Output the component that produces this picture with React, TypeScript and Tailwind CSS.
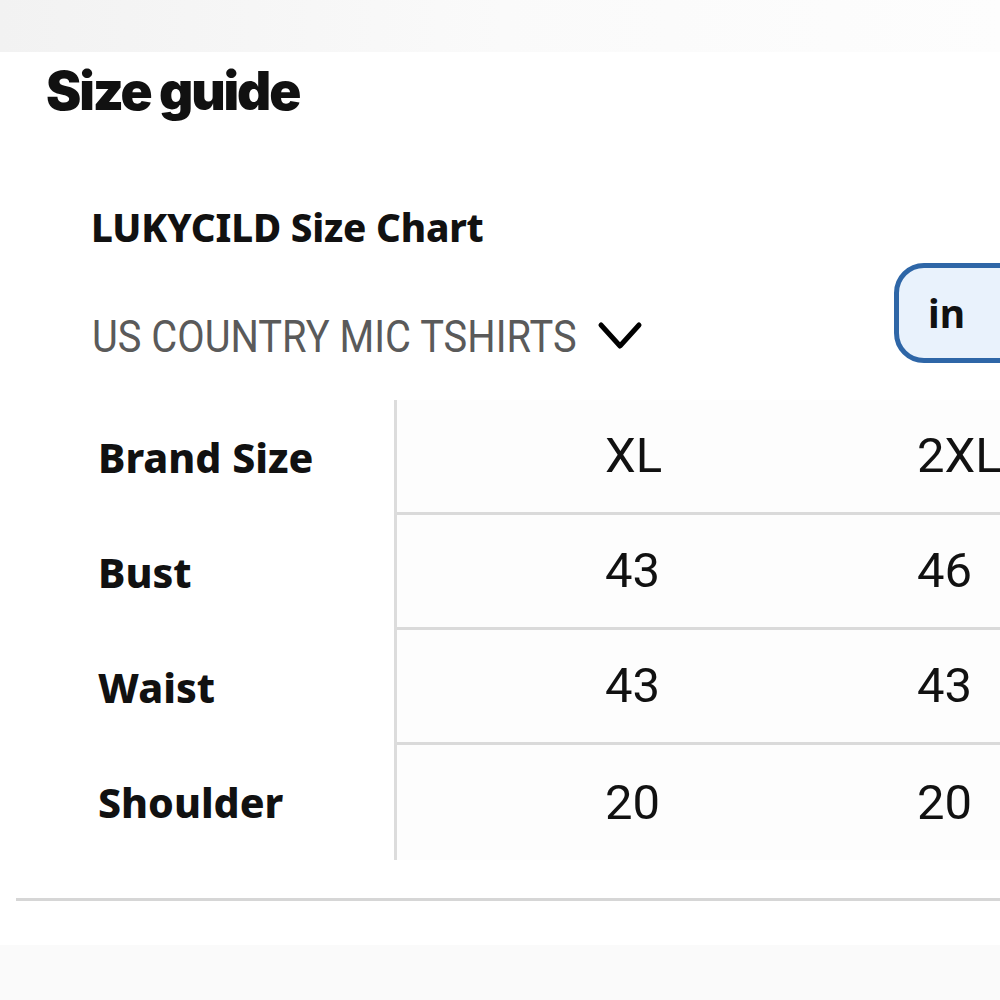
const rows = [
  { label: "Brand Size", values: ["XL", "2XL"] },
  { label: "Bust", values: ["43", "46"] },
  { label: "Waist", values: ["43", "43"] },
  { label: "Shoulder", values: ["20", "20"] },
];

export default function App() {
  return (
    <div className="w-[1000px] h-[1000px] overflow-hidden bg-white flex flex-col">
      {/* faded top strip */}
      <div className="h-[52px] shrink-0 bg-gradient-to-r from-[#f2f2f2] via-[#fafafa] to-[#fdfdfd]" />

      <div className="flex-1 flex flex-col">
        <h1 className="pl-[46px] pt-[3px] font-['Inter',sans-serif] text-[53px] leading-[72px] font-black tracking-[-0.04em] text-[#111]">
          Size guide
        </h1>

        <div className="pl-[91px] pt-[80px]">
          <h2 className="font-['Noto_Sans',sans-serif] text-[38.5px] leading-[40px] font-extrabold tracking-[-0.005em] text-[#111]">
            LUKYCILD Size Chart
          </h2>
        </div>

        <div className="flex items-start justify-between pl-[92px] mt-[16px]">
          <button className="flex items-center mt-[48px]">
            <span className="font-['Roboto',sans-serif] text-[45px] leading-[52px] text-[#5a5a5a] scale-x-[0.885] origin-left inline-block w-[505px] whitespace-nowrap text-left">
              US COUNTRY MIC TSHIRTS
            </span>
            <svg width="46" height="32" viewBox="0 0 46 32" className="-mt-[2px]">
              <polyline points="4,5 23,26 42,5" fill="none" stroke="#000" strokeWidth="5" strokeLinecap="round" strokeLinejoin="round" />
            </svg>
          </button>
          <div className="-mr-[30px] w-[136px] h-[100px] rounded-[30px] border-[5px] border-[#2e66a7] bg-[#e9f2fc] flex items-center pl-[29px]">
            <span className="font-['Noto_Sans',sans-serif] text-[39px] font-bold text-[#111]">in</span>
          </div>
        </div>

        <div className="mt-[37px] flex">
          <div className="w-[397px] shrink-0 border-r-[3px] border-[#dcdcdc]">
            {rows.map((r) => (
              <div key={r.label} className="h-[115px] flex items-center pl-[98px]">
                <span className="font-['Noto_Sans',sans-serif] text-[41px] font-extrabold text-[#111]">
                  {r.label}
                </span>
              </div>
            ))}
          </div>
          <div className="flex-1 bg-[#fdfdfd]">
            {rows.map((r, i) => (
              <div
                key={r.label}
                className={`h-[115px] flex items-center ${i < rows.length - 1 ? "border-b-[3px] border-[#dadada]" : ""}`}
              >
                {r.values.map((v) => (
                  <span
                    key={v}
                    className="w-[312px] shrink-0 pl-[208px] font-['Roboto',sans-serif] text-[49px] text-[#111]"
                  >
                    {v}
                  </span>
                ))}
              </div>
            ))}
          </div>
        </div>

        <div className="ml-[16px] mt-[38px] h-[3px] bg-[#d6d6d6]" />
      </div>

      <div className="h-[55px] shrink-0 bg-[#fafafa]" />
    </div>
  );
}
